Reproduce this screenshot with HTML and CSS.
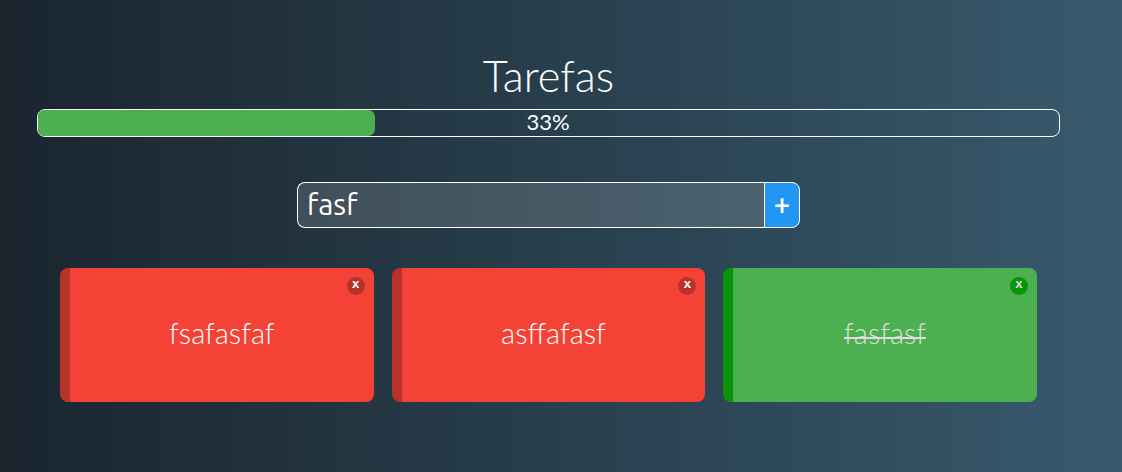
FILE: index.html
```html
<!DOCTYPE html>
<html lang="pt-BR">
<head>
<meta charset="utf-8">
<title>Tarefas</title>
<link rel="stylesheet" href="styles.css">
</head>
<body>
<main class="app">
  <h1 class="title">Tarefas</h1>
  <div class="progress">
    <span class="progress-value">33%</span>
    <div class="progress-bar"></div>
  </div>
  <div class="new-task">
    <input class="task-input" type="text" value="fasf">
    <button class="add-button">+</button>
  </div>
  <div class="task-grid">
    <div class="task pending"><span class="close">x</span><p>fsafasfaf</p></div>
    <div class="task pending"><span class="close">x</span><p>asffafasf</p></div>
    <div class="task done"><span class="close">x</span><p>fasfasf</p></div>
  </div>
</main>
</body>
</html>
```
FILE: styles.css
```css
* { box-sizing: border-box; }
body {
  margin: 0;
  height: 472px;
  overflow: hidden;
  color: #fff;
  font-family: Lato, sans-serif;
  background: linear-gradient(to right, #1a252e, #283f4d 50%, #385a6e);
}
.app {
  display: flex;
  flex-direction: column;
  align-items: center;
  width: 1023px;
  margin-left: 37px;
  padding-top: 48px;
}
.title { margin: 0 0 7px; font-size: 43.3px; line-height: 54px; font-weight: 300; }
.progress {
  position: relative;
  width: 100%;
  height: 28px;
  border: 1px solid #fff;
  border-radius: 8px;
}
.progress-bar { width: 33%; height: 100%; border-radius: 7px; background: #4caf50; }
.progress-value {
  position: absolute;
  inset: 0;
  padding-right: 1px;
  text-align: center;
  font-size: 22px;
  line-height: 24px;
}
.new-task { display: flex; width: 503px; height: 46px; margin-top: 45px; }
.task-input {
  width: 467px;
  padding: 0 9px 2px;
  border: 1px solid #fff;
  border-right: 0;
  border-radius: 8px 0 0 8px;
  background: rgba(255, 255, 255, 0.14);
  color: #fff;
  font: 500 29.5px Ubuntu, "Noto Sans", sans-serif;
  font-weight: 400;
  outline: none;
}
.add-button {
  width: 36px;
  padding: 0 0 5px;
  border: 1px solid #fff;
  border-radius: 0 8px 8px 0;
  background: #2196f3;
  color: #fff;
  font: 500 29px Ubuntu, Lato, sans-serif;
}
.task-grid {
  display: grid;
  grid-template-columns: repeat(3, 1fr);
  gap: 18px;
  width: 977px;
  margin-top: 40px;
}
.task {
  position: relative;
  display: flex;
  align-items: center;
  justify-content: center;
  height: 134px;
  padding-bottom: 5px;
  border-left: 10px solid;
  border-radius: 8px;
  font-size: 29px;
  font-weight: 300;
}
.task p { margin: 0; }
.pending { background: #f44336; border-color: #b73229; }
.done { background: #4caf50; border-color: #0a9409; }
.done p { position: relative; color: #ddd; }
.done p::after {
  content: "";
  position: absolute;
  left: 0;
  right: 0;
  bottom: 11px;
  height: 2px;
  background: #ddd;
}
.close {
  position: absolute;
  top: 9px;
  right: 9px;
  width: 18px;
  height: 18px;
  border-radius: 50%;
  font-family: Ubuntu, "Open Sans", sans-serif;
  font-size: 13.5px;
  font-weight: 700;
  line-height: 13px;
  text-align: center;
}
.pending .close { background: #b73229; }
.done .close { background: #0a9409; color: #ddd; }
```
